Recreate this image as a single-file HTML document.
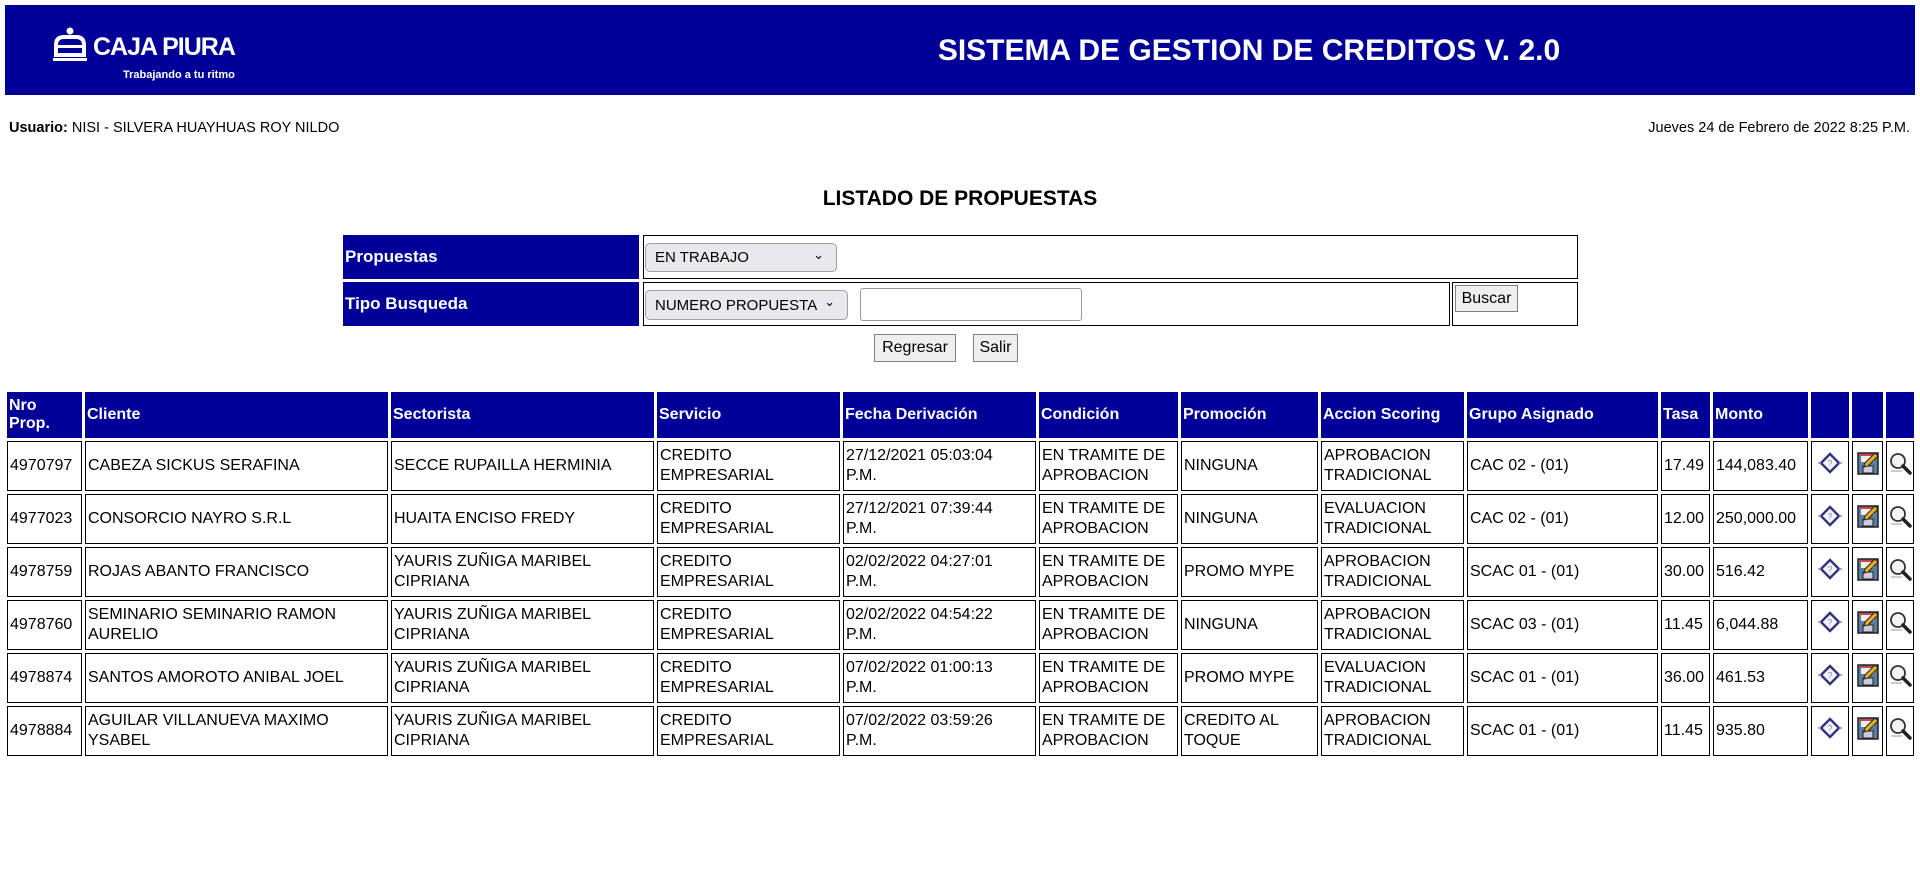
<!DOCTYPE html>
<html><head><meta charset="utf-8"><style>
*{margin:0;padding:0;box-sizing:border-box}
body{width:1920px;height:892px;background:#fff;font-family:"Liberation Sans",Arial,sans-serif;color:#000;position:relative;overflow:hidden}
.hdr{position:absolute;left:5px;top:5px;width:1910px;height:90px;background:#000099}
.logo{position:absolute;left:46px;top:22px;color:#fff}
.title{position:absolute;left:0;width:100%;top:0;line-height:92px;text-align:center;padding-left:578px;color:#fff;font-weight:bold;font-size:30px}
.user{position:absolute;left:9px;top:120px;font-size:14.5px}
.date{position:absolute;right:10px;top:120px;font-size:14.5px}
.list{position:absolute;left:0;width:1920px;top:187px;text-align:center;font-weight:bold;font-size:21px}
.bl{position:absolute;background:#000099;color:#fff;font-weight:bold;font-size:17px;padding-left:2px;display:flex;align-items:center}
.bx{position:absolute;border:1px solid #000}
.sel{position:absolute;border:1px solid #a0a0a0;border-radius:5px;background:#e9e9ed;font-size:15px;padding-left:9px;display:flex;align-items:center}
.sel span.c{position:absolute;right:12px;top:3px;font-size:13px}
.btn{position:absolute;border:1px solid #808080;background:#efefef;font-size:16px;display:flex;align-items:center;justify-content:center}
table{position:absolute;left:4px;top:389px;border-collapse:separate;border-spacing:3px}
th{background:#000099;color:#fff;text-align:left;font-size:16px;height:46px;padding:0 2px;vertical-align:middle;line-height:18px}
td{border:1px solid #000;font-size:16px;height:50px;padding:0 2px;line-height:20px;vertical-align:middle}
td.i{text-align:center;padding:0}
</style></head><body>
<div class="hdr">
 <div class="logo">
  <svg width="46" height="38" viewBox="0 0 46 38" style="position:absolute;left:0;top:0">
   <circle cx="19" cy="4" r="3.5" fill="#fff"/>
   <path d="M5 28 V18 Q5 10 13 10 H25 Q33 10 33 18 V28 Z" fill="none" stroke="#fff" stroke-width="4"/>
   <rect x="6" y="18" width="26" height="3" fill="#fff"/>
   <rect x="2" y="31" width="34" height="3" fill="#fff"/>
  </svg>
  <div style="position:absolute;left:42px;top:6px;font-weight:bold;font-size:25px;letter-spacing:-1px;white-space:nowrap">CAJA PIURA</div>
  <div style="position:absolute;left:72px;top:42px;font-size:11px;font-weight:bold;white-space:nowrap">Trabajando a tu ritmo</div>
 </div>
 <div class="title">SISTEMA DE GESTION DE CREDITOS V. 2.0</div>
</div>
<div class="user"><b>Usuario:</b> NISI - SILVERA HUAYHUAS ROY NILDO</div>
<div class="date">Jueves 24 de Febrero de 2022 8:25 P.M.</div>
<div class="list">LISTADO DE PROPUESTAS</div>

<div class="bl" style="left:343px;top:235px;width:296px;height:44px">Propuestas</div>
<div class="bx" style="left:643px;top:235px;width:935px;height:44px"></div>
<div class="sel" style="left:645px;top:243px;width:192px;height:29px">EN TRABAJO<span class="c">&#8964;</span></div>
<div class="bl" style="left:343px;top:282px;width:296px;height:44px">Tipo Busqueda</div>
<div class="bx" style="left:643px;top:282px;width:807px;height:44px"></div>
<div class="bx" style="left:1452px;top:282px;width:126px;height:44px"></div>
<div class="sel" style="left:645px;top:290px;width:203px;height:30px">NUMERO PROPUESTA<span class="c">&#8964;</span></div>
<div class="bx" style="left:860px;top:288px;width:222px;height:33px;border-color:#999;border-radius:3px"></div>
<div class="btn" style="left:1455px;top:285px;width:63px;height:27px">Buscar</div>
<div class="btn" style="left:874px;top:334px;width:82px;height:28px">Regresar</div>
<div class="btn" style="left:973px;top:334px;width:45px;height:28px">Salir</div>

<svg width="0" height="0" style="position:absolute">
 <defs>
  <g id="d"><path d="M3 12 L12 3 L21 12 L12 21 Z" fill="#f4f4ff" stroke="#33337a" stroke-width="2.4"/><path d="M0 12h3M21 12h3" stroke="#8888bb" stroke-width="1.5"/><text x="12" y="15.5" font-size="9" text-anchor="middle" fill="#8888aa" font-family="Liberation Sans">?</text></g>
  <g id="f"><rect x="2" y="2" width="20" height="21" fill="#5a7ea0" stroke="#222" stroke-width="1.5"/><rect x="5" y="3" width="13" height="8" fill="#eee"/><rect x="4" y="3" width="14" height="2" fill="#c44"/><rect x="7" y="15" width="10" height="7" fill="#ccd" stroke="#222"/><path d="M9 12 L19 2 L22 5 L12 15 L8 16 Z" fill="#e8b020" stroke="#222" stroke-width="1"/></g>
  <g id="m"><circle cx="10" cy="10" r="7" fill="#f4f4f4" stroke="#333" stroke-width="1.8"/><path d="M15 15 L22 22" stroke="#222" stroke-width="3.5" stroke-linecap="round"/><path d="M3 20 H14" stroke="#999" stroke-width="1"/></g>
 </defs>
</svg>

<table>
<tr><th style="width:75px">Nro<br>Prop.</th><th style="width:303px">Cliente</th><th style="width:263px">Sectorista</th><th style="width:183px">Servicio</th><th style="width:193px">Fecha Derivación</th><th style="width:139px">Condición</th><th style="width:137px">Promoción</th><th style="width:143px">Accion Scoring</th><th style="width:191px">Grupo Asignado</th><th style="width:49px">Tasa</th><th style="width:95px">Monto</th><th style="width:38px"></th><th style="width:31px"></th><th style="width:28px"></th></tr>
<tr><td>4970797</td><td>CABEZA SICKUS SERAFINA</td><td>SECCE RUPAILLA HERMINIA</td><td>CREDITO EMPRESARIAL</td><td>27/12/2021 05:03:04<br>P.M.</td><td>EN TRAMITE DE APROBACION</td><td>NINGUNA</td><td>APROBACION TRADICIONAL</td><td>CAC 02 - (01)</td><td>17.49</td><td>144,083.40</td><td class="i"><svg width="24" height="24"><use href="#d"/></svg></td><td class="i"><svg width="24" height="24"><use href="#f"/></svg></td><td class="i"><svg width="24" height="24"><use href="#m"/></svg></td></tr>
<tr><td>4977023</td><td>CONSORCIO NAYRO S.R.L</td><td>HUAITA ENCISO FREDY</td><td>CREDITO EMPRESARIAL</td><td>27/12/2021 07:39:44<br>P.M.</td><td>EN TRAMITE DE APROBACION</td><td>NINGUNA</td><td>EVALUACION TRADICIONAL</td><td>CAC 02 - (01)</td><td>12.00</td><td>250,000.00</td><td class="i"><svg width="24" height="24"><use href="#d"/></svg></td><td class="i"><svg width="24" height="24"><use href="#f"/></svg></td><td class="i"><svg width="24" height="24"><use href="#m"/></svg></td></tr>
<tr><td>4978759</td><td>ROJAS ABANTO FRANCISCO</td><td>YAURIS ZUÑIGA MARIBEL CIPRIANA</td><td>CREDITO EMPRESARIAL</td><td>02/02/2022 04:27:01<br>P.M.</td><td>EN TRAMITE DE APROBACION</td><td>PROMO MYPE</td><td>APROBACION TRADICIONAL</td><td>SCAC 01 - (01)</td><td>30.00</td><td>516.42</td><td class="i"><svg width="24" height="24"><use href="#d"/></svg></td><td class="i"><svg width="24" height="24"><use href="#f"/></svg></td><td class="i"><svg width="24" height="24"><use href="#m"/></svg></td></tr>
<tr><td>4978760</td><td>SEMINARIO SEMINARIO RAMON AURELIO</td><td>YAURIS ZUÑIGA MARIBEL CIPRIANA</td><td>CREDITO EMPRESARIAL</td><td>02/02/2022 04:54:22<br>P.M.</td><td>EN TRAMITE DE APROBACION</td><td>NINGUNA</td><td>APROBACION TRADICIONAL</td><td>SCAC 03 - (01)</td><td>11.45</td><td>6,044.88</td><td class="i"><svg width="24" height="24"><use href="#d"/></svg></td><td class="i"><svg width="24" height="24"><use href="#f"/></svg></td><td class="i"><svg width="24" height="24"><use href="#m"/></svg></td></tr>
<tr><td>4978874</td><td>SANTOS AMOROTO ANIBAL JOEL</td><td>YAURIS ZUÑIGA MARIBEL CIPRIANA</td><td>CREDITO EMPRESARIAL</td><td>07/02/2022 01:00:13<br>P.M.</td><td>EN TRAMITE DE APROBACION</td><td>PROMO MYPE</td><td>EVALUACION TRADICIONAL</td><td>SCAC 01 - (01)</td><td>36.00</td><td>461.53</td><td class="i"><svg width="24" height="24"><use href="#d"/></svg></td><td class="i"><svg width="24" height="24"><use href="#f"/></svg></td><td class="i"><svg width="24" height="24"><use href="#m"/></svg></td></tr>
<tr><td>4978884</td><td>AGUILAR VILLANUEVA MAXIMO YSABEL</td><td>YAURIS ZUÑIGA MARIBEL CIPRIANA</td><td>CREDITO EMPRESARIAL</td><td>07/02/2022 03:59:26<br>P.M.</td><td>EN TRAMITE DE APROBACION</td><td>CREDITO AL TOQUE</td><td>APROBACION TRADICIONAL</td><td>SCAC 01 - (01)</td><td>11.45</td><td>935.80</td><td class="i"><svg width="24" height="24"><use href="#d"/></svg></td><td class="i"><svg width="24" height="24"><use href="#f"/></svg></td><td class="i"><svg width="24" height="24"><use href="#m"/></svg></td></tr>
</table>
</body></html>
